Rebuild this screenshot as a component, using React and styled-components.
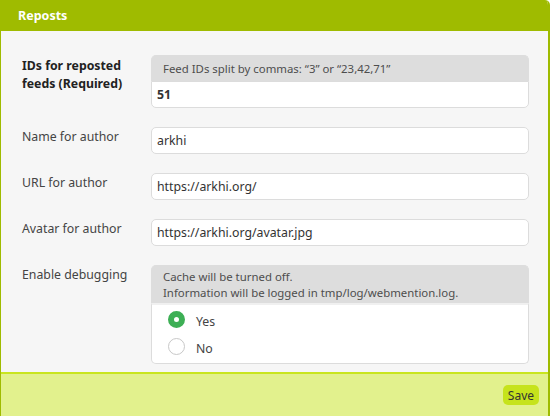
import React from "react";
import styled, { createGlobalStyle } from "styled-components";

const GlobalStyle = createGlobalStyle`
  html, body {
    margin: 0;
    padding: 0;
    background: #ffffff;
  }
  body {
    font-family: "Noto Sans", "DejaVu Sans", sans-serif;
    font-size: 12.3px;
    color: #444;
  }
`;

const Panel = styled.div`
  width: 550px;
  height: 416px;
  display: flex;
  flex-direction: column;
  border-left: 1px solid #9fbb00;
  border-right: 2px solid #9fbb00;
  border-radius: 0 5px 0 0;
  overflow: hidden;
  box-sizing: border-box;
`;

const Header = styled.div`
  flex-shrink: 0;
  height: 31px;
  background: #9fbb00;
  color: #fff;
  font-weight: bold;
  font-size: 12.5px;
  display: flex;
  align-items: center;
  padding-left: 17px;
  box-sizing: border-box;
`;

const Body = styled.div`
  flex: 1;
  background: #f6f6f6;
  padding: 24px 19px 8px 21px;
  display: flex;
  flex-direction: column;
  gap: 19px;
`;

const Row = styled.div`
  display: grid;
  grid-template-columns: 129px 1fr;
  align-items: start;
`;

const Label = styled.label`
  font-size: 12.3px;
  line-height: 18px;
  padding-top: ${(p) => p.$top || 1}px;
  color: ${(p) => (p.$bold ? "#222" : "#444")};
  font-weight: ${(p) => (p.$bold ? "bold" : "normal")};
`;

const Group = styled.div`
  display: flex;
  flex-direction: column;
`;

const Addon = styled.div`
  background: #dddddd;
  color: #4d4d4d;
  font-size: 11.4px;
  line-height: 16px;
  padding: ${(p) => p.$pad || "5px 11px 4px"};
  border-radius: 5px 5px 0 0;
  border: 1px solid #dddddd;
  border-bottom: none;
`;

const Input = styled.div`
  height: 27px;
  box-sizing: border-box;
  background: #fff;
  border: 1px solid #dcdcdc;
  border-radius: ${(p) => (p.$attached ? "0 0 5px 5px" : "5px")};
  display: flex;
  align-items: center;
  padding: 0 5px;
  font-size: 12.3px;
  color: #333;
  font-weight: ${(p) => (p.$bold ? "bold" : "normal")};
`;

const RadioList = styled.div`
  background: #fff;
  border: 1px solid #dcdcdc;
  border-top: 2px solid #f0f0f0;
  border-radius: 0 0 5px 5px;
  padding: 2px 0 2px 16px;
  display: flex;
  flex-direction: column;
`;

const RadioRow = styled.div`
  height: 27px;
  display: flex;
  align-items: center;
  gap: 11px;
  font-size: 12.3px;
  color: #444;
  padding-top: 2px;
  box-sizing: border-box;
`;

const Radio = styled.span`
  width: 17px;
  height: 17px;
  border-radius: 50%;
  box-sizing: border-box;
  border: ${(p) => (p.$on ? "6px solid #3daf55" : "1px solid #c8c8c8")};
  background: #fff;
  margin-top: -4px;
`;

const Footer = styled.div`
  flex-shrink: 0;
  height: 44px;
  background: #e2f18d;
  border-top: 2px solid #c9e51f;
  box-sizing: border-box;
  display: flex;
  align-items: center;
  justify-content: flex-end;
  padding-right: 9px;
`;

const SaveButton = styled.button`
  font-family: inherit;
  font-size: 12px;
  color: #333;
  background: #c6e31c;
  border: none;
  border-radius: 5px;
  height: 20px;
  padding: 0 5px;
`;

const App = () => {
  return (
    <>
      <GlobalStyle />
      <Panel>
        <Header>Reposts</Header>
        <Body>
          <Row>
            <Label $bold $top={2}>
              IDs for reposted
              <br />
              feeds (Required)
            </Label>
            <Group>
              <Addon>Feed IDs split by commas: “3” or “23,42,71”</Addon>
              <Input $attached $bold>51</Input>
            </Group>
          </Row>
          <Row>
            <Label>Name for author</Label>
            <Input>arkhi</Input>
          </Row>
          <Row>
            <Label>URL for author</Label>
            <Input>https://arkhi.org/</Input>
          </Row>
          <Row>
            <Label>Avatar for author</Label>
            <Input>https://arkhi.org/avatar.jpg</Input>
          </Row>
          <Row>
            <Label>Enable debugging</Label>
            <Group>
              <Addon $pad="3px 11px 2px">
                Cache will be turned off.
                <br />
                Information will be logged in tmp/log/webmention.log.
              </Addon>
              <RadioList>
                <RadioRow>
                  <Radio $on />
                  Yes
                </RadioRow>
                <RadioRow>
                  <Radio />
                  No
                </RadioRow>
              </RadioList>
            </Group>
          </Row>
        </Body>
        <Footer>
          <SaveButton>Save</SaveButton>
        </Footer>
      </Panel>
    </>
  );
};

export default App;
